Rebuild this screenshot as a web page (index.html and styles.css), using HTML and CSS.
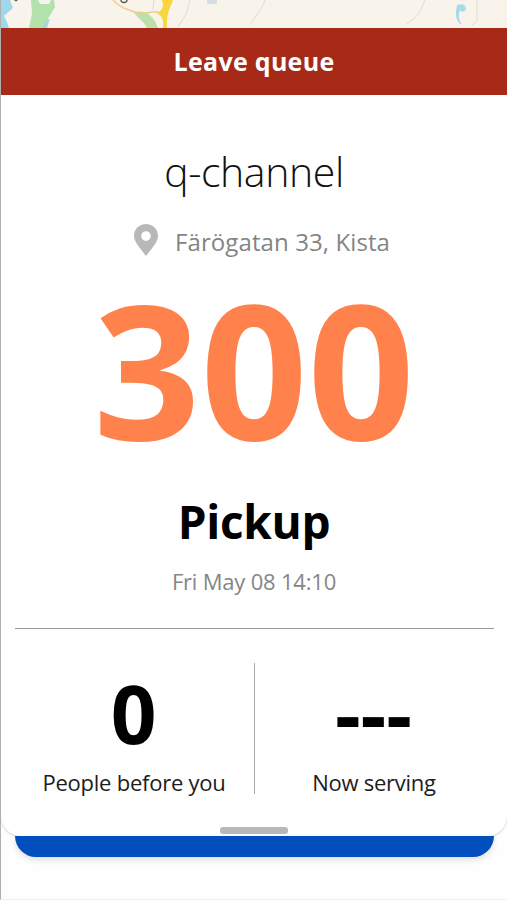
FILE: index.html
```html
<!DOCTYPE html>
<html lang="en">
<head>
    <meta charset="UTF-8">
    <meta name="viewport" content="width=device-width, initial-scale=1.0">
    <title>q-channel</title>
    <link rel="stylesheet" href="styles.css">
</head>
<body>

    <!-- Map strip -->
    <svg class="map" viewBox="0 0 507 28" aria-hidden="true">
        <path d="M0 0H10L13 8L4 16L7 22L9 28H0Z" fill="#9fd8ea"/>
        <path d="M40 28L42 21L50 19L47 28Z" fill="#9fd8ea"/>
        <path d="M31 0H54L55 7L46 22L42 28H29L32 14Z" fill="#b4e2ac"/>
        <path d="M38 0L40 4H49L51 0Z" fill="#f8f4eb"/>
        <path d="M134 12C144 10 153 13 158 28H147C143 20 136 17 134 12Z" fill="#bddfac"/>
        <path d="M113 0C120 8 127 9 135 12S151 11 158 12" fill="none" stroke="#f2cd86" stroke-width="1.5"/>
        <path d="M162 0H173C170 9 166 13 167 28H163C164 18 161 15 156 13C163 11 164 6 162 0Z" fill="#f9d63c"/>
        <path d="M154 0L153 10M190 0L186 14L178 27M265 0C262 10 254 18 250 25M425 0C420 14 416 18 406 24M477 0V21L472 25" fill="none" stroke="#dedbd1"/>
        <path d="M207 0H217V4H207Z" fill="#d5dde0"/>
        <path d="M457 5Q466 2 466 10L462 12L460 10Q457 18 462 25Q455 22 456 11Z" fill="#a9d9ea"/>
        <path d="M14 0H18L16 1.5Z" fill="#555"/>
        <path d="M121 0Q121 2.5 124 2.5T127 0" fill="none" stroke="#555" stroke-width="1.3"/>
    </svg>

    <!-- Ticket -->
    <div class="ticket">
        <button class="leave-button">Leave queue</button>
        <h1 class="channel">q-channel</h1>
        <div class="address">
            <svg class="pin" viewBox="0 0 24 32">
                <path d="M12 0C5.4 0 0 5 0 11.8C0 17 4 22 12 32C20 22 24 17 24 11.8C24 5 18.6 0 12 0ZM12 7.3A4.8 4.8 0 1 1 12 16.9A4.8 4.8 0 1 1 12 7.3Z" fill="#b8b8b8" fill-rule="evenodd"/>
            </svg>
            <span>Färögatan 33, Kista</span>
        </div>
        <div class="number">300</div>
        <h2 class="status">Pickup</h2>
        <div class="date">Fri May 08 14:10</div>

        <div class="stats">
            <div class="stat">
                <div class="stat-value">0</div>
                <div class="stat-label">People before you</div>
            </div>
            <div class="stat">
                <div class="stat-value">---</div>
                <div class="stat-label">Now serving</div>
            </div>
        </div>
        <div class="handle"></div>
    </div>

    <!-- Blue button behind the ticket -->
    <div class="blue-button"></div>

</body>
</html>
```
FILE: styles.css
```css
* {
    box-sizing: border-box;
}

body {
    margin: 0;
    height: 900px;
    overflow: hidden;
    font-family: "Open Sans", sans-serif;
    background-color: #fefefe;
    border-left: 1px solid #b0b0b0;
    border-bottom: 1px solid #eee;
    text-align: center;
}

.map {
    display: block;
    width: 507px;
    height: 28px;
    margin-left: -1px;
    background-color: #f8f4eb;
}

.ticket {
    display: flex;
    flex-direction: column;
    align-items: center;
    height: 808px;
    background-color: #fff;
    border-radius: 0 0 20px 20px;
    box-shadow: 0 1px 2px rgba(0, 0, 0, 0.2);
}

.leave-button {
    width: 100%;
    height: 67px;
    padding: 0 0 1px;
    border: none;
    background-color: #a62a17;
    color: #fff;
    font-family: inherit;
    font-size: 25px;
    font-weight: 700;
    letter-spacing: 0.3px;
}

.channel {
    margin: 46px 0 0;
    font-size: 41px;
    font-weight: 300;
    line-height: 60px;
    letter-spacing: -0.4px;
    color: #111;
}

.address {
    display: flex;
    align-items: center;
    gap: 17px;
    margin-top: 21px;
    padding-left: 16px;
    font-size: 24px;
    line-height: 40px;
    letter-spacing: 0.1px;
    color: #848484;
}

.pin {
    width: 24px;
    height: 32px;
    margin-bottom: 4px;
}

.number {
    margin-top: 16px;
    font-size: 187.5px;
    font-weight: 700;
    line-height: 180px;
    color: #ff824d;
}

.status {
    margin: 33px 0 0;
    font-size: 46px;
    font-weight: 700;
    line-height: 60px;
    letter-spacing: -0.3px;
    color: #000;
}

.date {
    margin-top: 15px;
    font-size: 22px;
    line-height: 30px;
    letter-spacing: -0.2px;
    color: #868686;
}

.stats {
    display: grid;
    grid-template-columns: 240px 239px;
    width: 479px;
    margin-top: 32px;
    padding-top: 34px;
    border-top: 1px solid #999;
}

.stat {
    height: 131px;
}

.stat:first-child {
    border-right: 1px solid #aaa;
}

.stat-value {
    padding-right: 1px;
    font-size: 80px;
    font-weight: 700;
    line-height: 99px;
    color: #000;
}

.stat-label {
    margin-top: 5px;
    font-size: 22px;
    line-height: 30px;
    letter-spacing: -0.25px;
    color: #1c1c1c;
}

.handle {
    width: 68px;
    height: 7px;
    margin-top: 33px;
    border-radius: 3px;
    background-color: #b8b8b8;
}

.blue-button {
    width: 479px;
    height: 21px;
    margin: 0 auto;
    border-radius: 0 0 26px 26px;
    background-color: #004fbd;
    box-shadow: 0 3px 6px rgba(0, 0, 0, 0.12);
}
```
